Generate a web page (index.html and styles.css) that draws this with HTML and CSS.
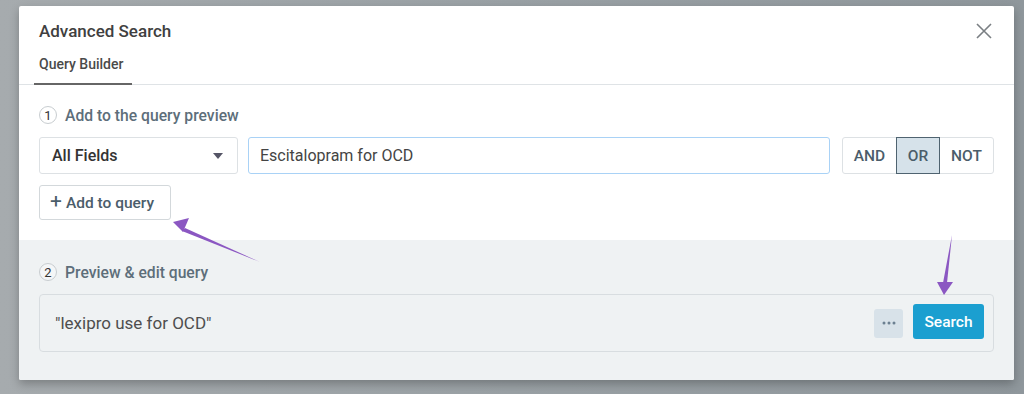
FILE: index.html
```html
<!DOCTYPE html>
<html>
<head>
<meta charset="utf-8">
<link rel="stylesheet" href="styles.css">
</head>
<body>
<div class="modal">
  <div class="header">
    <h1 class="title">Advanced Search</h1>
    <button class="close" aria-label="Close">
      <svg width="16" height="16" viewBox="0 0 16 16"><path d="M1 1L15 15M15 1L1 15" stroke="#7a7f83" stroke-width="1.6" fill="none"/></svg>
    </button>
  </div>
  <div class="tabs">
    <div class="tab active">Query Builder</div>
  </div>
  <div class="section one">
    <div class="step"><span class="num">1</span><span class="label">Add to the query preview</span></div>
    <div class="row">
      <div class="select">All Fields<span class="caret"></span></div>
      <div class="input">Escitalopram for OCD</div>
      <div class="ops">
        <span class="op">AND</span>
        <span class="op active">OR</span>
        <span class="op">NOT</span>
      </div>
    </div>
    <button class="add"><span class="plus">+</span>Add to query</button>
  </div>
  <div class="section two">
    <div class="step"><span class="num">2</span><span class="label">Preview &amp; edit query</span></div>
    <div class="preview">
      <span class="query">"lexipro use for OCD"</span>
      <span class="more" aria-label="More">
        <svg width="14" height="4" viewBox="0 0 14 4"><circle cx="2" cy="2" r="1.5" fill="#6c8091"/><circle cx="7" cy="2" r="1.5" fill="#6c8091"/><circle cx="12" cy="2" r="1.5" fill="#6c8091"/></svg>
      </span>
      <button class="search">Search</button>
    </div>
  </div>
  <svg class="arrows" width="995" height="374" viewBox="0 0 995 374">
    <path d="M241 256 L166 222 L163 225 Z" fill="#8b57c2"/>
    <path d="M154 216 L170 212 L167 219 L164 226 Z" fill="#8b57c2"/>
    <path d="M933 229 L924 277 L928 277 Z" fill="#8b57c2"/>
    <path d="M918 276 L934 276 L925 289 Z" fill="#8b57c2"/>
  </svg>
</div>
</body>
</html>
```

FILE: styles.css
```css
* { box-sizing: border-box; }
html, body { margin: 0; padding: 0; }
body {
  width: 1024px;
  height: 394px;
  background: linear-gradient(90deg, #a6abae 0%, #9aa1a5 50%, #8f979c 100%);
  font-family: Roboto, "Liberation Sans", sans-serif;
  overflow: hidden;
  padding-top: 6px;
  padding-left: 19px;
}
.modal {
  position: relative;
  width: 995px;
  height: 374px;
  background: #fff;
  border-radius: 2px;
  box-shadow: 0 4px 10px rgba(0,0,0,0.25);
  display: flex;
  flex-direction: column;
  overflow: hidden;
}
.header {
  display: flex;
  justify-content: space-between;
  align-items: center;
  padding: 6px 22px 0 20px;
  height: 44px;
}
.title {
  margin: 0;
  font-size: 17px;
  font-weight: 500;
  color: #404040;
}
.close {
  border: 0;
  background: none;
  padding: 0;
  width: 16px;
  height: 16px;
  display: flex;
}
.tabs {
  display: flex;
  padding-left: 15px;
  border-bottom: 1px solid #dfe3e6;
  height: 35px;
}
.tab {
  padding: 6px 5px 0;
  font-size: 14px;
  font-weight: 500;
  color: #4a4a4a;
  border-bottom: 2px solid #666;
  margin-bottom: -1px;
  width: 98px;
}
.section { padding: 0 20px; }
.section.one {
  height: 155px;
  padding-top: 21px;
}
.section.two {
  flex: 1;
  background: #eff2f3;
  padding-top: 23px;
}
.step {
  display: flex;
  align-items: center;
  height: 18px;
}
.num {
  width: 18px;
  height: 18px;
  border: 1px solid #c8cdd0;
  border-radius: 50%;
  font-size: 13px;
  display: flex;
  align-items: center;
  justify-content: center;
  color: #333;
  background: #fff;
}
.two .num { background: #f4f6f7; }
.label {
  margin-left: 8px;
  font-size: 15.7px;
  font-weight: 500;
  color: #5d6e7a;
}
.row {
  display: flex;
  margin-top: 13px;
  height: 37px;
}
.row > * { flex-shrink: 0; }
.select {
  width: 199px;
  border: 1px solid #dde1e4;
  border-radius: 3px;
  display: flex;
  align-items: center;
  justify-content: space-between;
  padding: 0 14px 0 12px;
  font-size: 16px;
  font-weight: 500;
  color: #333;
}
.caret {
  width: 0;
  height: 0;
  border-left: 5.5px solid transparent;
  border-right: 5.5px solid transparent;
  border-top: 6px solid #556;
}
.input {
  width: 582px;
  margin-left: 10px;
  border: 1px solid #a9d2f6;
  border-radius: 3px;
  display: flex;
  align-items: center;
  padding-left: 11px;
  font-size: 16px;
  color: #444;
}
.ops {
  margin-left: 12px;
  display: flex;
  border: 1px solid #dde1e4;
  border-radius: 3px;
  height: 37px;
}
.op {
  display: flex;
  align-items: center;
  justify-content: center;
  font-size: 15.5px;
  font-weight: 500;
  color: #4b5d6a;
  width: 53px;
}
.op.active {
  width: 44px;
  background: #d6e2ea;
  border: 1px solid #4f6370;
  margin: -1px 0;
  height: 37px;
}
.add {
  margin-top: 11px;
  height: 35px;
  width: 132px;
  border: 1px solid #d3d8db;
  border-radius: 3px;
  background: #fff;
  font-family: inherit;
  font-size: 15.5px;
  font-weight: 500;
  color: #4b5d6a;
  display: flex;
  align-items: center;
  padding: 0 10px;
}
.plus {
  font-size: 21px;
  font-weight: 400;
  margin-right: 4px;
  line-height: 1;
  margin-top: -2px;
}
.preview {
  margin-top: 13px;
  height: 58px;
  border: 1px solid #d8dde0;
  border-radius: 4px;
  display: flex;
  align-items: center;
  padding: 0 9px 0 15px;
}
.query {
  flex: 1;
  font-size: 17px;
  color: #4e4e4e;
}
.more {
  width: 29px;
  height: 29px;
  background: #d8e2e9;
  border-radius: 3px;
  display: flex;
  align-items: center;
  justify-content: center;
  margin-right: 10px;
}
.search {
  height: 35px;
  width: 71px;
  background: #1b9fd0;
  border: 0;
  border-radius: 3px;
  color: #fff;
  font-family: inherit;
  font-size: 15.5px;
  font-weight: 500;
  margin-top: -3px;
}
.arrows {
  position: absolute;
  left: 0;
  top: 0;
  pointer-events: none;
}
```
